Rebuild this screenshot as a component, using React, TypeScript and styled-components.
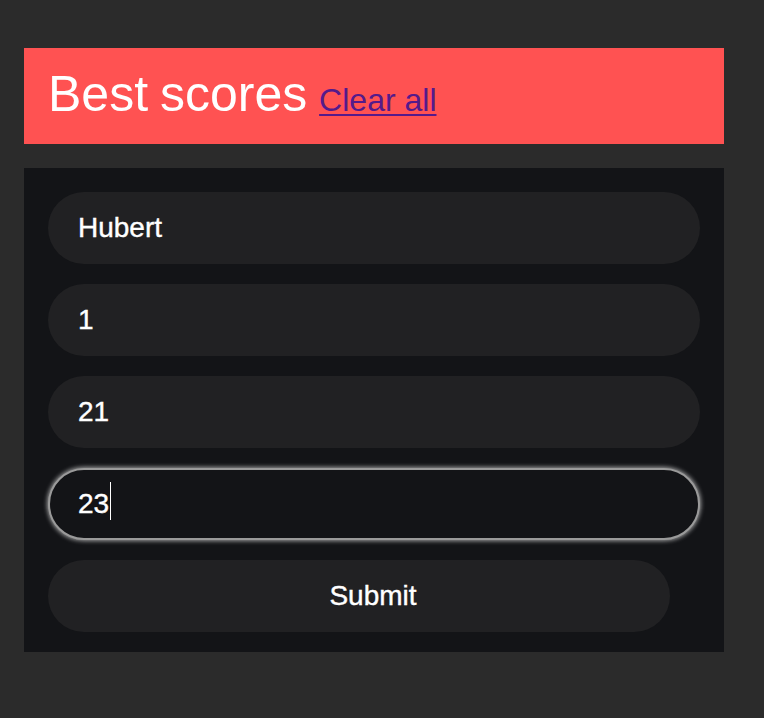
import React from "react";
import styled, { createGlobalStyle } from "styled-components";

const Global = createGlobalStyle`
  html, body { margin: 0; padding: 0; background: #2b2b2b; }
  body { font-family: "Liberation Sans", Arial, Helvetica, sans-serif; }
`;

const Page = styled.div`
  padding: 48px 40px 48px 24px;
  min-height: 718px;
  box-sizing: border-box;
  background: #2b2b2b;
`;

const Header = styled.header`
  background: #ff5252;
  height: 96px;
  padding: 0 24px;
  display: flex;
  align-items: center;
  margin-bottom: 24px;
`;

const Title = styled.h1`
  margin: 0;
  padding-bottom: 4px;
  font-size: 50px;
  font-weight: 400;
  color: #ffffff;
  line-height: 1;
  word-spacing: -2px;
`;

const ClearLink = styled.a`
  font-size: 32px;
  word-spacing: 0;
  color: #551a8b;
  text-decoration: underline;
  text-decoration-thickness: 2px;
  text-underline-offset: 3px;
`;

const Panel = styled.form`
  background: #131417;
  padding: 24px 24px 0 24px;
  display: flex;
  flex-direction: column;
  align-items: flex-start;
`;

const FieldWrap = styled.div`
  position: relative;
  width: 100%;
  margin-bottom: 20px;
`;

const Field = styled.input<{ $focused?: boolean }>`
  display: block;
  box-sizing: border-box;
  width: 100%;
  height: 72px;
  border-radius: 36px;
  border: 2px solid ${(p) => (p.$focused ? "#9a9a9a" : "transparent")};
  background: ${(p) => (p.$focused ? "#131417" : "#212123")};
  box-shadow: ${(p) => (p.$focused ? "0 0 4px 1px rgba(220,220,220,0.7)" : "none")};
  color: #ffffff;
  font-family: "Liberation Sans", Arial, sans-serif;
  font-size: 28px;
  -webkit-text-stroke: 0.4px #ffffff;
  padding: 0 28px;
  margin: 0;
  outline: none;
`;

const Caret = styled.span`
  position: absolute;
  left: 62px;
  top: 14px;
  width: 1px;
  height: 38px;
  background: #ffffff;
`;

const SubmitButton = styled.button`
  box-sizing: border-box;
  width: 622px;
  height: 72px;
  margin-bottom: 20px;
  border-radius: 36px;
  border: none;
  background: #212123;
  color: #ffffff;
  font-family: "Liberation Sans", Arial, sans-serif;
  font-size: 28px;
  -webkit-text-stroke: 0.4px #ffffff;
  padding: 0 0 0 28px;
  cursor: pointer;
`;

export default function App() {
  return (
    <>
      <Global />
      <Page>
        <Header>
          <Title>
            Best scores <ClearLink href="#">Clear all</ClearLink>
          </Title>
        </Header>
        <Panel onSubmit={(e) => e.preventDefault()}>
          <FieldWrap>
            <Field defaultValue="Hubert" />
          </FieldWrap>
          <FieldWrap>
            <Field defaultValue="1" />
          </FieldWrap>
          <FieldWrap>
            <Field defaultValue="21" />
          </FieldWrap>
          <FieldWrap>
            <Field $focused defaultValue="23" />
            <Caret />
          </FieldWrap>
          <SubmitButton type="submit">Submit</SubmitButton>
        </Panel>
      </Page>
    </>
  );
}
